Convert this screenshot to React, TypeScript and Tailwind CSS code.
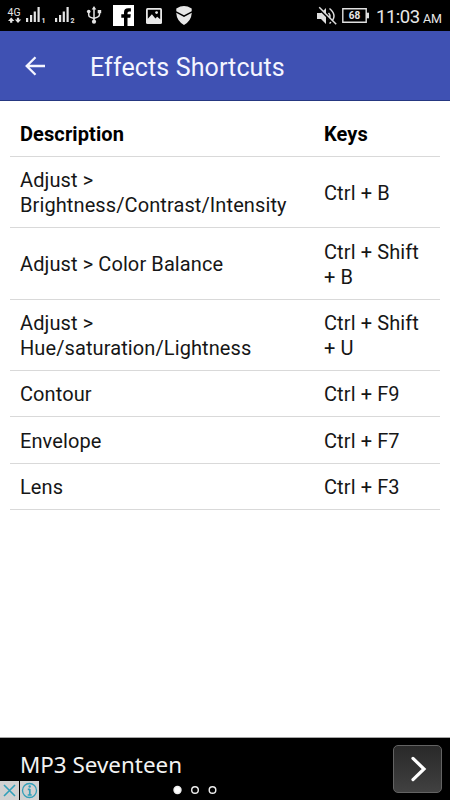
const rows = [
  { description: ['Adjust >', 'Brightness/Contrast/Intensity'], keys: ['Ctrl + B'], height: 'h-[71px] pt-[2px]' },
  { description: ['Adjust > Color Balance'], keys: ['Ctrl + Shift', '+ B'], height: 'h-[72px] pt-[2px]' },
  { description: ['Adjust >', 'Hue/saturation/Lightness'], keys: ['Ctrl + Shift', '+ U'], height: 'h-[71px] pt-[1px]' },
  { description: ['Contour'], keys: ['Ctrl + F9'], height: 'h-[46px] pt-[2px]' },
  { description: ['Envelope'], keys: ['Ctrl + F7'], height: 'h-[47px] pt-[2px]' },
  { description: ['Lens'], keys: ['Ctrl + F3'], height: 'h-[46px] pt-[1px]' },
];

function Signal({ label }: { label: string }) {
  return (
    <svg className="h-[17px] w-[20px]" viewBox="0 0 20 17" fill="#e4e4e4">
      <path d="M0 11h2.2v4H0zM4 8h2.2v7H4zM7.7 4.5h2.2V15H7.7zM11.5 0h2.2v15h-2.2z" />
      <text x="15.6" y="16" fontSize="7" fontWeight="700" fontFamily="Roboto, sans-serif">{label}</text>
    </svg>
  );
}

function StatusBar() {
  return (
    <div className="flex h-[31px] shrink-0 items-start bg-black text-[#e8e8e8]">
      <svg className="mt-[6px] ml-[7px] h-[18px] w-[15px]" viewBox="0 0 15 18" fill="#e4e4e4">
        <text x="0.5" y="10" fontSize="11.5" fontFamily="Roboto, sans-serif" textLength="13" lengthAdjust="spacingAndGlyphs">4G</text>
        <path d="M4.2 11.5l3.2 3.6H5.3v1.7H3.1v-1.7H1zM11 17l-3.2-3.6h2.1v-1.7h2.2v1.7h2.1z" />
      </svg>
      <div className="mt-[7px] ml-[4px]"><Signal label="1" /></div>
      <div className="mt-[7px] ml-[9px]"><Signal label="2" /></div>
      <svg className="mt-[6px] ml-[11px] h-[18px] w-[16px]" viewBox="0 0 16 18" fill="none" stroke="#e4e4e4" strokeWidth="1.5">
        <path d="M8 2v14M2.7 6v3q0 1.8 2 2.4L8 12.5l3.5-1.4q2-.7 2-2.5V6" />
        <path d="M8 0l2.3 3.4H5.7zM11.7 4h3.5v3.2h-3.5z" fill="#e4e4e4" stroke="none" />
        <circle cx="2.7" cy="5.5" r="1.8" fill="#e4e4e4" stroke="none" />
        <circle cx="8" cy="15.7" r="2.1" fill="#e4e4e4" stroke="none" />
      </svg>
      <svg className="mt-[5px] ml-[11px] h-[21px] w-[21px]" viewBox="0 0 21 21">
        <path fill="#fff" d="M0 0h21v21H0z" />
        <path fill="#000" d="M11 21v-8.2H8.3V9.3H11V7.2q0-4 4.2-4h2.7v3.4h-1.8q-1.6 0-1.6 1.5v1.2h3.3l-.5 3.5h-2.8V21z" />
      </svg>
      <svg className="mt-[8px] ml-[12px] h-[16px] w-[16px]" viewBox="0 0 16 16">
        <rect width="16" height="16" rx="1.5" fill="#e8e8e8" />
        <path fill="#000" d="M1.8 1.8h12.4v9.5l-3-2.5-1.8 1.8-3.5-4.4-4.1 4.5z" />
        <circle cx="10.6" cy="4.6" r="1.4" fill="#e8e8e8" />
      </svg>
      <svg className="mt-[6px] ml-[14px] h-[19px] w-[16px]" viewBox="0 0 16 19" fill="#e8e8e8">
        <path d="M.3 2.4Q4.5 0 8 0q3.5 0 7.7 2.4v2.8L8 9.2.3 5.2z" />
        <path d="M.2 6.8L8 11l7.8-4.2Q15.3 15 8 19 .7 15 .2 6.8z" />
      </svg>
      <svg className="mt-[6px] ml-[125px] h-[20px] w-[20px]" viewBox="0 0 20 20" fill="none" stroke="#dedede" strokeWidth="1.5">
        <path fill="#dedede" stroke="none" d="M0 7h4l5-5v16l-5-5H0z" />
        <path d="M11.5 7q3 3 0 6M12.5 2.5q9 7.5 0 15" />
        <path d="M1.2 2.2l17 17" stroke="#000" strokeWidth="1.7" />
        <path d="M2.2 1.2l17 17" />
      </svg>
      <svg className="mt-[8px] ml-[5px] h-[15px] w-[27px]" viewBox="0 0 27 15">
        <path d="M.8.8h23.4v13.4H.8z" fill="none" stroke="#e0e0e0" strokeWidth="1.4" />
        <path d="M24 4.7h3v5.6h-3z" fill="#e0e0e0" />
        <text x="12.5" y="11.2" fill="#e8e8e8" textAnchor="middle" fontSize="10" fontWeight="700" fontFamily="Roboto, sans-serif">68</text>
      </svg>
      <div className="mt-[5px] ml-[7px] flex items-baseline whitespace-nowrap leading-6">
        <span className="w-[47px] text-[18.5px] tracking-[-0.5px]">11:03</span>
        <span className="text-[12.5px] tracking-[-0.2px]">AM</span>
      </div>
    </div>
  );
}

export default function App() {
  return (
    <div className="flex h-[800px] w-[450px] flex-col overflow-hidden bg-white font-['Roboto',sans-serif] text-[#161616]">
      <StatusBar />
      <header className="flex h-[70px] shrink-0 items-center border-b border-[#263881] bg-[#3f51b3] text-[#f4f5ff]">
        <svg className="ml-[25px] h-[20px] w-[21px]" viewBox="0 0 21 20" fill="none" stroke="currentColor" strokeWidth="2.3">
          <path d="M20 10H2M10.5 1.2L1.7 10l8.8 8.8" />
        </svg>
        <h1 className="mt-[4px] ml-[44px] text-[25px] leading-[30px] tracking-[0.12px]">Effects Shortcuts</h1>
      </header>
      <main className="flex-1 px-[10px] pt-[10px] text-[20px] leading-[25px] tracking-[0.1px]">
        <div className="grid h-[46px] grid-cols-[304px_1fr] items-center border-b border-[#d9d9d9] pt-[2px] pl-[10px] font-bold text-black">
          <span>Description</span>
          <span>Keys</span>
        </div>
        {rows.map((row) => (
          <div key={row.description.join(' ')} className={`grid grid-cols-[304px_1fr] items-center border-b border-[#d9d9d9] pl-[10px] ${row.height}`}>
            <div>{row.description.map((line) => <div key={line}>{line}</div>)}</div>
            <div>{row.keys.map((line) => <div key={line}>{line}</div>)}</div>
          </div>
        ))}
      </main>
      <footer className="relative flex h-[63px] shrink-0 items-start justify-between border-t border-[#a5a5a5] bg-black pr-[8px] pl-[20px] text-[#f2f2f2]">
        <span className="mt-[12px] font-['Noto_Sans',sans-serif] text-[22.4px] leading-[30px]">MP3 Seventeen</span>
        <button className="mt-[7px] flex h-[48px] w-[49px] items-center justify-center rounded-[5px] border border-[#636363] bg-linear-to-b from-[#292929] to-[#414141]">
          <svg className="ml-[3px] h-[26px] w-[16px]" viewBox="0 0 16 26" fill="none" stroke="#fff" strokeWidth="3.2" strokeLinecap="round">
            <path d="M2 2.4L13 13 2 23.6" />
          </svg>
        </button>
        <div className="absolute bottom-0 left-0 flex gap-[1px]">
          <svg className="h-[19px] w-[19px] bg-[#d1d1d1]" viewBox="0 0 19 19" fill="none" stroke="#329fb9" strokeWidth="1.6">
            <path d="M4 4l11 11M15 4L4 15" />
          </svg>
          <svg className="h-[19px] w-[19px] bg-[#d1d1d1]" viewBox="0 0 19 19" fill="none" stroke="#329fb9" strokeWidth="1.3">
            <circle cx="9.5" cy="9.5" r="7" />
            <path d="M9.8 8v6M7.8 8.4h2M7.7 14h4" strokeWidth="1.7" />
            <circle cx="9.7" cy="5.5" r="1.2" fill="#329fb9" stroke="none" />
          </svg>
        </div>
        <svg className="absolute bottom-[5px] left-[173px] h-[10px] w-[45px]" viewBox="0 0 45 10" fill="none" stroke="#eee" strokeWidth="1.4">
          <circle cx="4.5" cy="5" r="3.5" fill="#fff" />
          <circle cx="22" cy="5" r="3.3" />
          <circle cx="39.5" cy="5" r="3.3" />
        </svg>
      </footer>
    </div>
  );
}
